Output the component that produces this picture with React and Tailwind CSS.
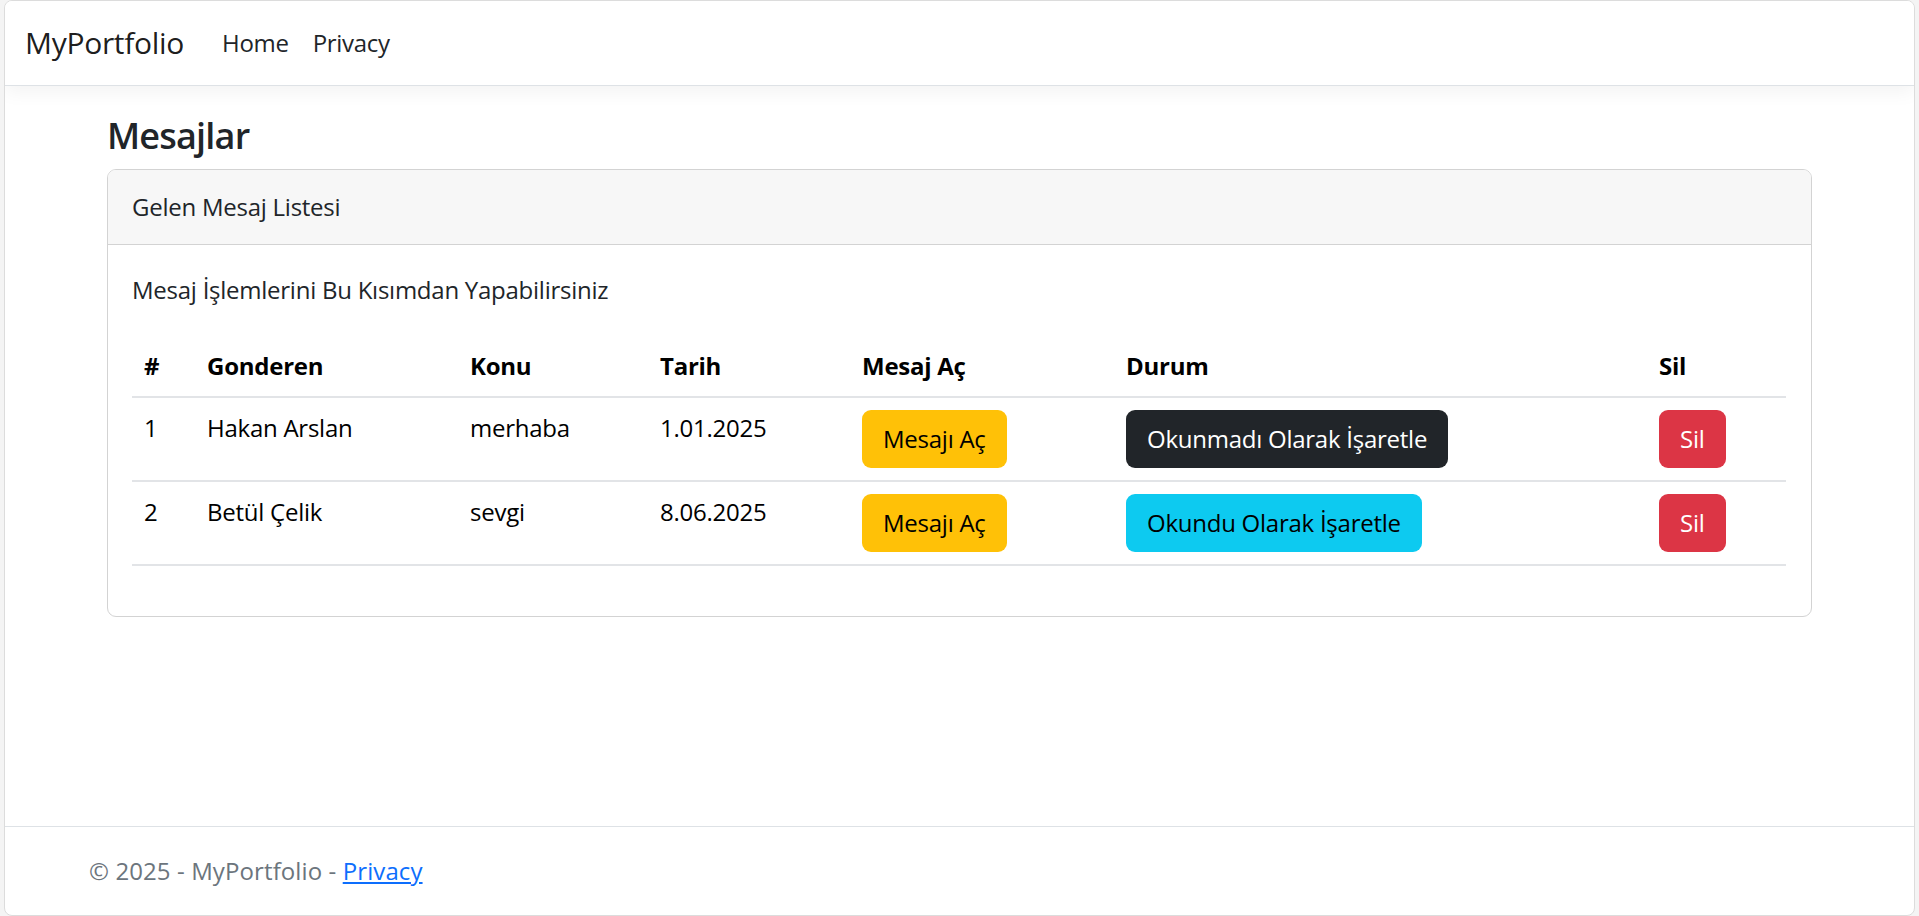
const font = { fontFamily: '"Open Sans", "Noto Sans", sans-serif' };

const messages = [
  { id: 1, sender: "Hakan Arslan", subject: "merhaba", date: "1.01.2025", read: false },
  { id: 2, sender: "Betül Çelik", subject: "sevgi", date: "8.06.2025", read: true },
];

const cols = ["w-[63px]", "w-[263px]", "w-[190px]", "w-[202px]", "w-[264px]", "w-[533px]", "w-[139px]"];
const heads = ["#", "Gonderen", "Konu", "Tarih", "Mesaj Aç", "Durum", "Sil"];

const Btn = ({ className, children }) => (
  <button
    className={`inline-flex items-center justify-center h-[58px] px-[21px] rounded-[9px] text-[24px] leading-[36px] tracking-[-0.25px] ${className}`}
  >
    {children}
  </button>
);

export default function App() {
  return (
    <div className="w-[1919px] h-[916px] bg-[#f4f4f4] pl-[4px] pr-[4px] overflow-hidden" style={font}>
      <div className="h-[916px] bg-white border border-[#dcdcdc] rounded-[8px] overflow-hidden flex flex-col text-[#212529]">
        {/* navbar */}
        <nav className="h-[85px] shrink-0 flex items-center pl-[20px] border-b border-[#dee2e6] shadow-[0_6px_18px_rgba(0,0,0,0.05)] relative z-10 bg-white">
          <span className="w-[185px] text-[30px] text-black/90 tracking-[-0.3px] pb-[2px]">MyPortfolio</span>
          <a className="px-[12px] text-[24px] text-[#212529] tracking-[-0.3px]">Home</a>
          <a className="px-[12px] text-[24px] text-[#212529] tracking-[-0.3px]">Privacy</a>
        </nav>

        <main className="flex-1 px-[102px]">
          <h4 className="mt-[28px] mb-[12px] text-[36px] leading-[43px] font-semibold tracking-[-0.8px]">Mesajlar</h4>

          <div className="border border-[#d3d3d3] rounded-[9px] overflow-hidden">
            <div className="h-[75px] flex items-center px-[24px] bg-[#f7f7f7] border-b border-[#d3d3d3] text-[24px] tracking-[-0.25px]">
              Gelen Mesaj Listesi
            </div>
            <div className="px-[24px] pt-[27px] pb-[24px]">
              <p className="text-[24px] leading-[36px] mb-[28px] tracking-[-0.25px]">
                Mesaj İşlemlerini Bu Kısımdan Yapabilirsiniz
              </p>
              <table className="w-[1654px] mb-[26px] table-fixed border-collapse text-[24px] leading-[36px] text-black tracking-[-0.25px]">
                <colgroup>
                  {cols.map((c, i) => (
                    <col key={i} className={c} />
                  ))}
                </colgroup>
                <thead>
                  <tr className="border-b-2 border-[#e2e4e7]">
                    {heads.map((h) => (
                      <th key={h} className="text-left font-bold px-[12px] py-[12px]">
                        {h}
                      </th>
                    ))}
                  </tr>
                </thead>
                <tbody>
                  {messages.map((m) => (
                    <tr key={m.id} className="border-b-2 border-[#e2e4e7] align-top">
                      <td className="px-[12px] py-[12px]">{m.id}</td>
                      <td className="px-[12px] py-[12px]">{m.sender}</td>
                      <td className="px-[12px] py-[12px]">{m.subject}</td>
                      <td className="px-[12px] py-[12px]">{m.date}</td>
                      <td className="px-[12px] py-[12px]">
                        <Btn className="bg-[#ffc107] text-black">Mesajı Aç</Btn>
                      </td>
                      <td className="px-[12px] py-[12px]">
                        {m.read ? (
                          <Btn className="bg-[#0dcaf0] text-black">Okundu Olarak İşaretle</Btn>
                        ) : (
                          <Btn className="bg-[#212529] text-white">Okunmadı Olarak İşaretle</Btn>
                        )}
                      </td>
                      <td className="px-[12px] py-[12px]">
                        <Btn className="bg-[#dc3545] text-white">Sil</Btn>
                      </td>
                    </tr>
                  ))}
                </tbody>
              </table>
            </div>
          </div>
        </main>

        <footer className="h-[89px] shrink-0 border-t border-[#dee2e6] flex items-center pl-[84px] text-[24px] text-[#6c757d] tracking-[0.1px]">
          © 2025 - MyPortfolio -&nbsp;<a className="text-[#0d6efd] underline">Privacy</a>
        </footer>
      </div>
    </div>
  );
}
